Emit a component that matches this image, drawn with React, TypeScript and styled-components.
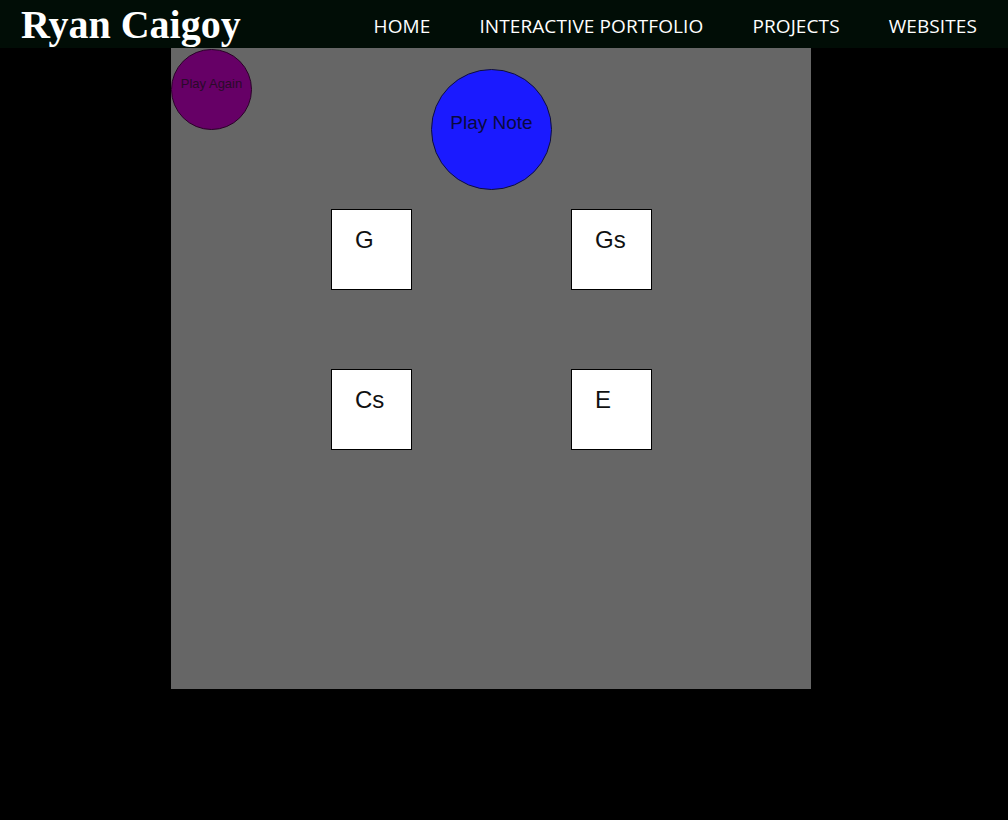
import React from "react";
import styled, { createGlobalStyle } from "styled-components";

const GlobalStyle = createGlobalStyle`
  html, body {
    margin: 0;
    padding: 0;
    background: #000000;
  }
  body {
    font-family: "Liberation Sans", Arial, sans-serif;
    overflow: hidden;
  }
`;

const Page = styled.div`
  width: 1008px;
  height: 820px;
  background: #000000;
  display: flex;
  flex-direction: column;
`;

const Header = styled.header`
  height: 48px;
  background: #010d06;
  display: flex;
  align-items: flex-start;
  justify-content: space-between;
  position: relative;
  z-index: 1;
`;

const Title = styled.h1`
  margin: 0;
  padding: 1px 0 0 21px;
  font-family: "Liberation Serif", "Times New Roman", serif;
  font-weight: bold;
  font-size: 40px;
  line-height: 48px;
  color: #ffffff;
  white-space: nowrap;
`;

const Nav = styled.nav`
  display: flex;
  gap: 49px;
  padding: 13px 31px 0 0;
`;

const NavLink = styled.a`
  font-family: "Open Sans", sans-serif;
  font-size: 19px;
  line-height: 26px;
  letter-spacing: 0.1px;
  color: #ffffff;
  text-decoration: none;
  white-space: nowrap;
`;

const Board = styled.main`
  margin-left: 171px;
  width: 640px;
  height: 641px;
  background: #666666;
  display: flex;
  flex-direction: column;
`;

const TopRow = styled.div`
  display: flex;
  align-items: flex-start;
`;

const Circle = styled.button<{ $size: number; $bg: string; $color: string; $font: number; $pad: number }>`
  box-sizing: border-box;
  width: ${(p) => p.$size}px;
  height: ${(p) => p.$size}px;
  border-radius: 50%;
  border: 1px solid #10103a;
  background: ${(p) => p.$bg};
  color: ${(p) => p.$color};
  font-family: "Liberation Sans", Arial, sans-serif;
  font-size: ${(p) => p.$font}px;
  line-height: 1.15;
  padding: ${(p) => p.$pad}px 0 0;
  margin: 0;
  display: flex;
  justify-content: center;
  align-items: flex-start;
  cursor: pointer;
  white-space: nowrap;
`;

const PlayAgain = styled(Circle)`
  margin-top: 1px;
  border-color: #2a0028;
`;

const PlayNote = styled(Circle)`
  margin-left: 179px;
  margin-top: 21px;
`;

const KeyGrid = styled.div`
  display: grid;
  grid-template-columns: 81px 81px;
  grid-auto-rows: 81px;
  column-gap: 159px;
  row-gap: 79px;
  margin-left: 160px;
  margin-top: 19px;
`;

const Key = styled.div`
  box-sizing: border-box;
  width: 81px;
  height: 81px;
  background: #ffffff;
  border: 1px solid #000000;
  padding: 16px 0 0 23px;
  font-family: "Liberation Sans", Arial, sans-serif;
  font-size: 24px;
  line-height: 28px;
  color: #111111;
`;

const keys = ["G", "Gs", "Cs", "E"];

export default function App() {
  return (
    <>
      <GlobalStyle />
      <Page>
        <Header>
          <Title>Ryan Caigoy</Title>
          <Nav>
            <NavLink href="#">HOME</NavLink>
            <NavLink href="#">INTERACTIVE PORTFOLIO</NavLink>
            <NavLink href="#">PROJECTS</NavLink>
            <NavLink href="#">WEBSITES</NavLink>
          </Nav>
        </Header>
        <Board>
          <TopRow>
            <PlayAgain $size={81} $bg="#660066" $color="#2a0a2a" $font={13} $pad={27}>
              Play Again
            </PlayAgain>
            <PlayNote $size={121} $bg="#1a1aff" $color="#0a0a40" $font={19} $pad={42}>
              Play Note
            </PlayNote>
          </TopRow>
          <KeyGrid>
            {keys.map((k) => (
              <Key key={k}>{k}</Key>
            ))}
          </KeyGrid>
        </Board>
      </Page>
    </>
  );
}
